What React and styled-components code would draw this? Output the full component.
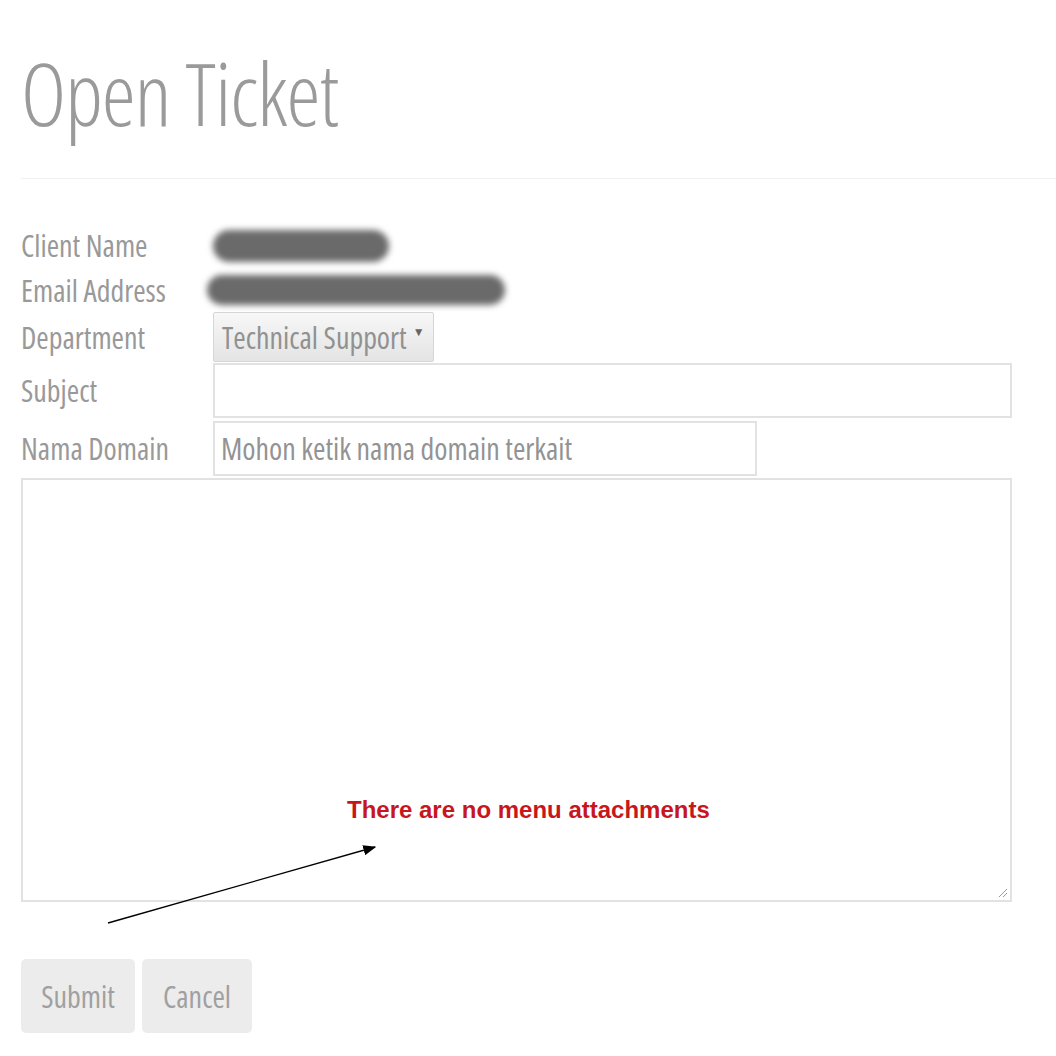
import styled, { createGlobalStyle } from 'styled-components';

const Global = createGlobalStyle`
body {
  margin: 0;
  background: #fff;
  font-family: "Open Sans", "Liberation Sans", sans-serif;
}
`

const Page = styled.div`
padding: 0 0 60px 21px;
`

const Title = styled.h1`
margin: 0;
padding-top: 43px;
font-family: "Open Sans", "Liberation Sans", sans-serif;
font-weight: 300;
font-stretch: 75%;
font-size: 86px;
line-height: 100px;
color: #9a9a9a;
letter-spacing: -1px;
`

const Divider = styled.hr`
margin: 35px 0 44px 0;
border: 0;
border-top: 1px solid #f1f1f1;
`

const Form = styled.form`
display: flex;
flex-direction: column;
`

const Row = styled.div`
display: flex;
align-items: center;
height: ${p => p.h}px;
margin-bottom: ${p => p.mb || 0}px;
`

const Label = styled.label`
width: 192px;
flex: none;
font-size: 30px;
font-stretch: 75%;
color: #999;
`

const Blur = styled.div`
width: ${p => p.w}px;
height: ${p => p.hh}px;
margin-left: ${p => p.ml || 0}px;
background: #6a6a6a;
border-radius: 20px;
filter: blur(3px);
`

const Select = styled.div`
height: 50px;
box-sizing: border-box;
display: flex;
align-items: center;
padding: 0 8px;
border: 1px solid #d6d6d6;
border-radius: 2px;
background: linear-gradient(#f7f7f7, #e4e4e4);
font-size: 30px;
font-stretch: 75%;
color: #919191;
`

const Caret = styled.span`
font-size: 12px;
margin-left: 6px;
margin-top: -12px;
color: #666;
`

const Input = styled.input`
box-sizing: border-box;
width: ${p => p.w}px;
height: 55px;
border: 2px solid #e2e2e2;
padding: 0 6px;
font-family: "Open Sans", "Liberation Sans", sans-serif;
font-size: 30px;
font-stretch: 75%;
color: #919191;
outline: none;
&::placeholder {
  color: #939393;
}
`

const Box = styled.div`
position: relative;
width: 991px;
height: 424px;
box-sizing: border-box;
border: 2px solid #e2e2e2;
margin-top: 2px;
`

const Grip = styled.svg`
position: absolute;
right: 2px;
bottom: 2px;
`

const Note = styled.div`
position: absolute;
left: 324px;
top: 316px;
font-family: "Liberation Sans", Arial, sans-serif;
font-weight: bold;
font-size: 24px;
color: #c8161d;
`

const Arrow = styled.svg`
position: absolute;
left: 0;
top: 0;
overflow: visible;
pointer-events: none;
`

const Buttons = styled.div`
display: flex;
gap: 7px;
margin-top: 57px;
`

const Button = styled.button`
height: 74px;
width: ${p => p.w}px;
border: 0;
border-radius: 5px;
background: #ececec;
font-family: "Open Sans", "Liberation Sans", sans-serif;
font-size: 30px;
font-stretch: 75%;
color: #a0a0a0;
`

export default function App() {
   return (
      <Page>
         <Global />
         <Title>Open Ticket</Title>
         <Divider />
         <Form>
            <Row h={45}>
               <Label>Client Name</Label>
               <Blur w={176} hh={32} />
            </Row>
            <Row h={44}>
               <Label>Email Address</Label>
               <Blur w={298} hh={30} ml={-6} />
            </Row>
            <Row h={50} mb={1}>
               <Label>Department</Label>
               <Select>Technical Support<Caret>▼</Caret></Select>
            </Row>
            <Row h={55} mb={3}>
               <Label>Subject</Label>
               <Input w={799} />
            </Row>
            <Row h={55}>
               <Label>Nama Domain</Label>
               <Input w={544} placeholder="Mohon ketik nama domain terkait" />
            </Row>
            <Box>
               <Note>There are no menu attachments</Note>
               <Arrow width="1" height="1">
                  <defs>
                     <marker id="head" markerWidth="10" markerHeight="8" refX="9" refY="4" orient="auto">
                        <path d="M0,0 L10,4 L0,8 Z" fill="#000" />
                     </marker>
                  </defs>
                  <line x1="85" y1="443" x2="352" y2="367" stroke="#000" strokeWidth="1.3" markerEnd="url(#head)" />
               </Arrow>
               <Grip width="10" height="10">
                  <path d="M1,9 L9,1 M5,9 L9,5" stroke="#999" strokeWidth="1" />
               </Grip>
            </Box>
            <Buttons>
               <Button w={114} type="button">Submit</Button>
               <Button w={110} type="button">Cancel</Button>
            </Buttons>
         </Form>
      </Page>
   );
}
